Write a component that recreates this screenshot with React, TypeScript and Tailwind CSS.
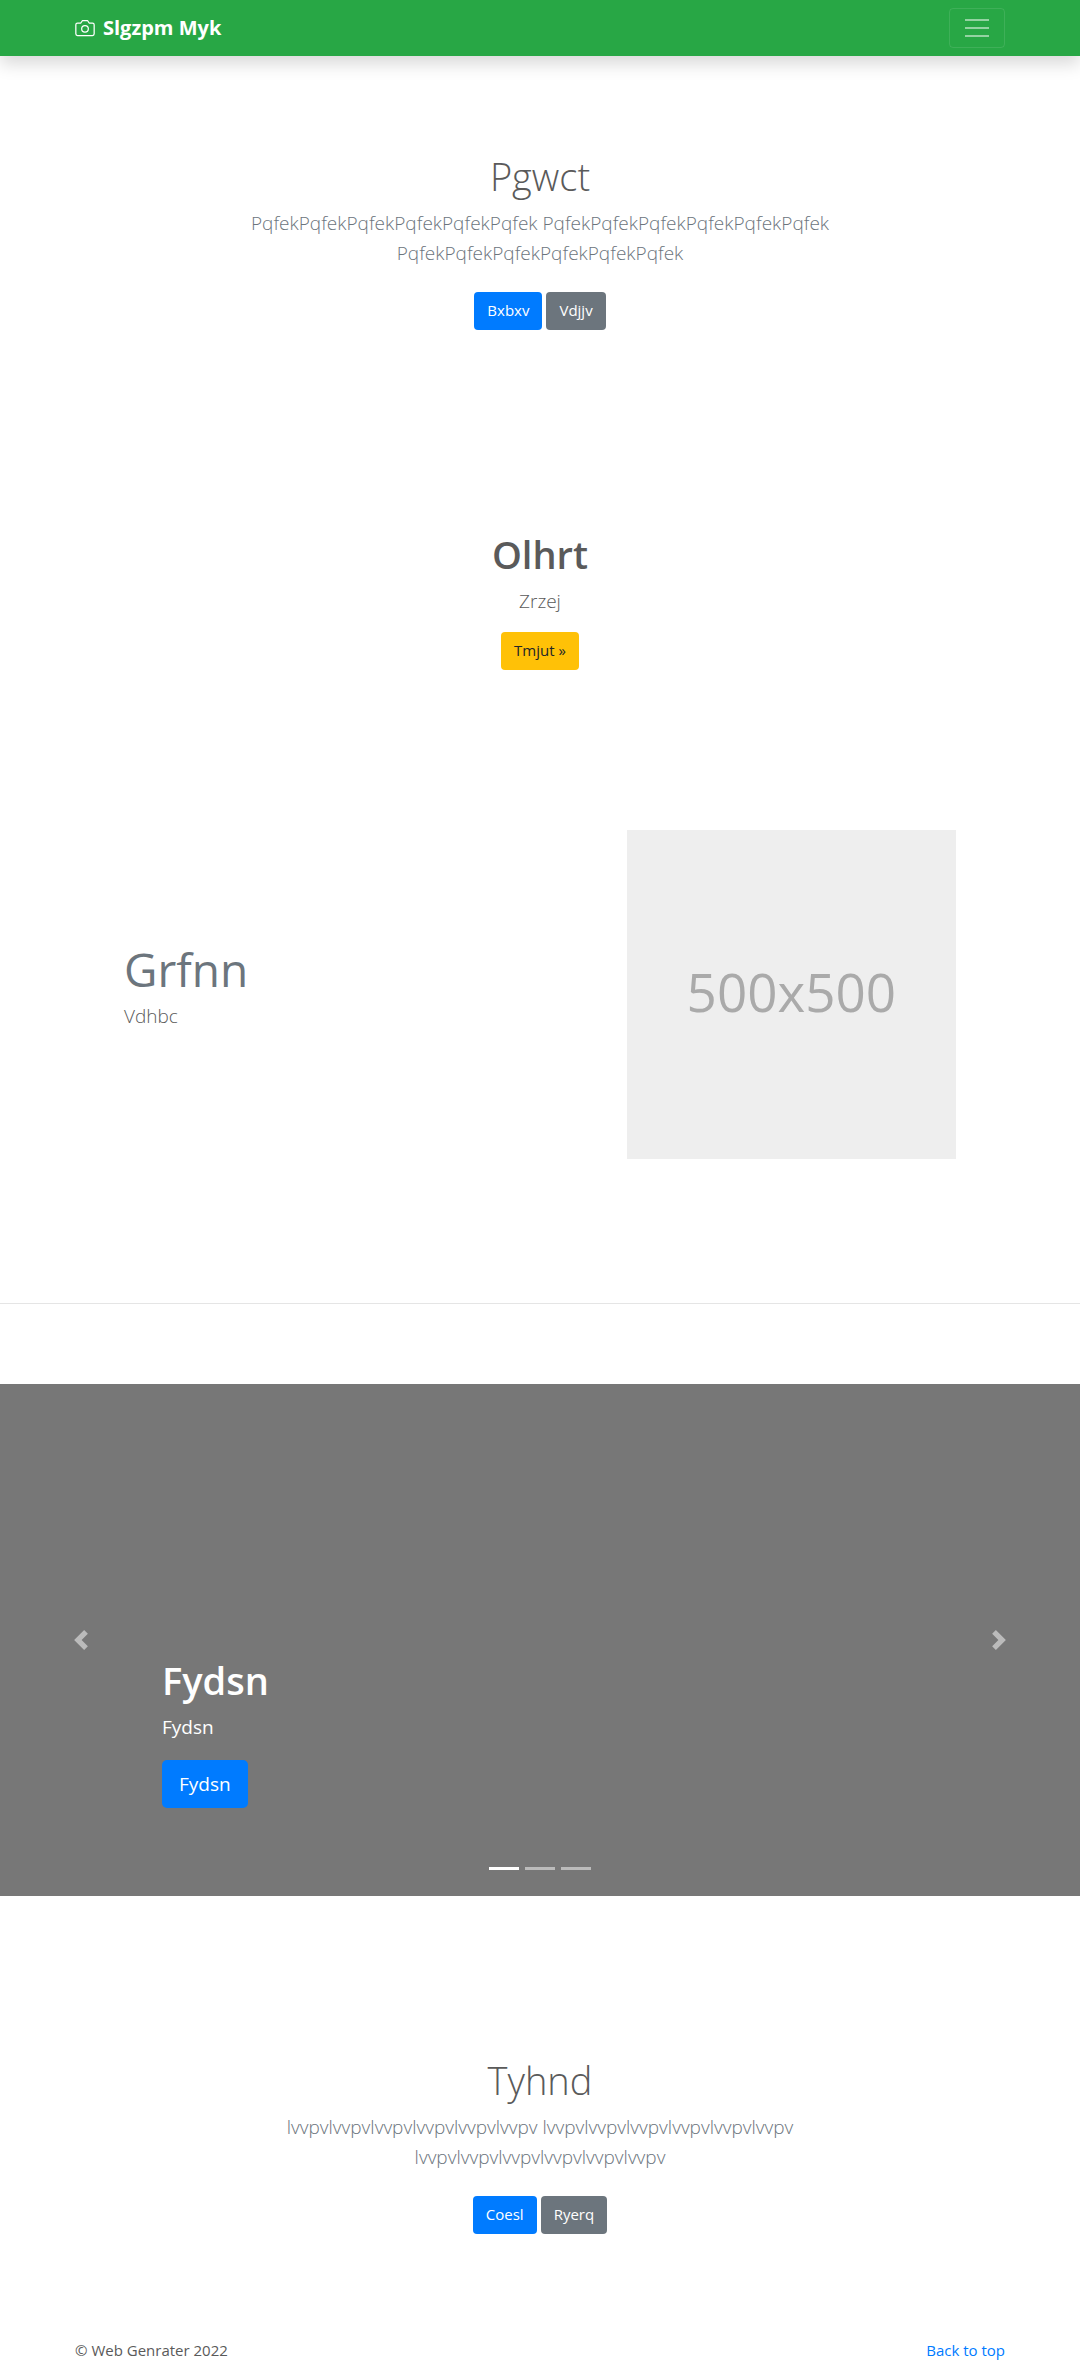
import React from "react";

type Variant = "primary" | "secondary" | "warning";

const variants: Record<Variant, string> = {
  primary: "bg-[#007bff] text-white",
  secondary: "bg-[#6c757d] text-white",
  warning: "bg-[#ffc107] text-[#212529]",
};

function Button({ variant, large, children }: { variant: Variant; large?: boolean; children: React.ReactNode }) {
  const size = large ? "h-12 rounded-[5px] px-[17px] text-[19px]" : "h-[38px] rounded px-[13px] pb-0.5 text-[15px]";
  return (
    <button type="button" className={`inline-flex items-center justify-center ${size} ${variants[variant]}`}>
      {children}
    </button>
  );
}

function Header() {
  return (
    <header className="relative z-10 bg-[#28a745] shadow-[0_8px_16px_rgba(0,0,0,0.15)]">
      <nav className="mx-auto flex h-14 max-w-[960px] items-center justify-between px-[15px]">
        <a href="#" className="flex items-center gap-2 text-xl leading-[30px] font-bold text-white">
          <svg width="20" height="20" viewBox="0 0 24 24" fill="none" stroke="currentColor" strokeWidth="1.5" strokeLinecap="round" strokeLinejoin="round" aria-hidden="true">
            <path d="M23 19a2 2 0 0 1-2 2H3a2 2 0 0 1-2-2V8a2 2 0 0 1 2-2h4l2-3h6l2 3h4a2 2 0 0 1 2 2z" />
            <circle cx="12" cy="13" r="4" />
          </svg>
          Slgzpm Myk
        </a>
        <button type="button" aria-label="Toggle navigation" className="flex h-10 w-14 items-center justify-center rounded border border-white/10">
          <svg width="30" height="30" viewBox="0 0 30 30" aria-hidden="true">
            <path d="M3 7h24M3 15h24M3 23h24" stroke="rgba(255,255,255,0.5)" strokeWidth="2" />
          </svg>
        </button>
      </nav>
    </header>
  );
}

function Hero({ title, lines, primary, secondary }: { title: string; lines: string[]; primary: string; secondary: string }) {
  return (
    <section className="px-4 text-center">
      <h1 className="text-[38px] leading-[48px] font-light">{title}</h1>
      <p className="mt-2 text-[19px] leading-[30px] font-light text-[#6c757d]">
        {lines.map((line) => (
          <span key={line} className="block">{line}</span>
        ))}
      </p>
      <div className="mt-6 flex justify-center gap-1">
        <Button variant="primary">{primary}</Button>
        <Button variant="secondary">{secondary}</Button>
      </div>
    </section>
  );
}

function Chevron({ direction }: { direction: "left" | "right" }) {
  const d =
    direction === "left"
      ? "M5.25 0l-4 4 4 4 1.5-1.5L4.25 4l2.5-2.5L5.25 0z"
      : "M2.75 0l-1.5 1.5L3.75 4l-2.5 2.5L2.75 8l4-4-4-4z";
  return (
    <svg width="20" height="20" viewBox="0 0 8 8" fill="#fff" aria-hidden="true">
      <path d={d} />
    </svg>
  );
}

function Carousel() {
  return (
    <section aria-label="Slides" className="relative flex h-[512px] flex-col justify-end bg-[#777] px-[15%] text-white">
      <h2 className="text-[38px] leading-[48px] font-semibold">Fydsn</h2>
      <p className="mt-2 text-[19px] leading-[30px]">Fydsn</p>
      <div className="mt-[18px] mb-[88px]">
        <Button variant="primary" large>Fydsn</Button>
      </div>
      <button type="button" aria-label="Previous" className="absolute inset-y-0 left-0 flex w-[15%] items-center justify-center opacity-50">
        <Chevron direction="left" />
      </button>
      <button type="button" aria-label="Next" className="absolute inset-y-0 right-0 flex w-[15%] items-center justify-center opacity-50">
        <Chevron direction="right" />
      </button>
      <div className="absolute inset-x-0 bottom-[26px] flex justify-center gap-[6px]">
        <button type="button" aria-label="Slide 1" className="h-[3px] w-[30px] bg-white" />
        <button type="button" aria-label="Slide 2" className="h-[3px] w-[30px] bg-white/50" />
        <button type="button" aria-label="Slide 3" className="h-[3px] w-[30px] bg-white/50" />
      </div>
    </section>
  );
}

const repeat = (word: string) => word.repeat(6);

export default function App() {
  return (
    <div className="bg-white font-['Open_Sans','Noto_Sans',sans-serif] text-[15px] leading-6 text-[#5a5a5a]">
      <Header />
      <main>
        <div className="pt-24">
          <Hero
            title="Pgwct"
            lines={[`${repeat("Pqfek")} ${repeat("Pqfek")}`, repeat("Pqfek")]}
            primary="Bxbxv"
            secondary="Vdjjv"
          />
        </div>

        <section className="mt-[200px] px-4 text-center">
          <h2 className="text-[38px] leading-[48px] font-semibold">Olhrt</h2>
          <p className="mt-2 mb-4 text-[19px] leading-[30px] font-light">Zrzej</p>
          <Button variant="warning">Tmjut »</Button>
        </section>

        <section className="mx-auto mt-40 flex max-w-[862px] items-center">
          <div className="w-7/12 px-[15px]">
            <h2 className="text-[46px] leading-[60px] text-[#6c757d]">Grfnn</h2>
            <p className="mt-0.5 mb-5 text-[19px] leading-[30px] font-light">Vdhbc</p>
          </div>
          <div className="w-5/12 px-[15px]">
            <div role="img" aria-label="500x500" className="flex aspect-square items-center justify-center bg-[#eee] pb-1.5 text-[53px] text-[#aaa]">
              500x500
            </div>
          </div>
        </section>

        <hr className="mt-36 mb-20 border-t border-black/10" />

        <Carousel />

        <div className="pt-40">
          <Hero
            title="Tyhnd"
            lines={[`${repeat("lvvpv")} ${repeat("lvvpv")}`, repeat("lvvpv")]}
            primary="Coesl"
            secondary="Ryerq"
          />
        </div>
      </main>
      <footer className="mx-auto mt-[104px] flex max-w-[960px] justify-between px-[15px]">
        <p>© Web Genrater 2022</p>
        <a href="#" className="text-[#007bff]">Back to top</a>
      </footer>
    </div>
  );
}
